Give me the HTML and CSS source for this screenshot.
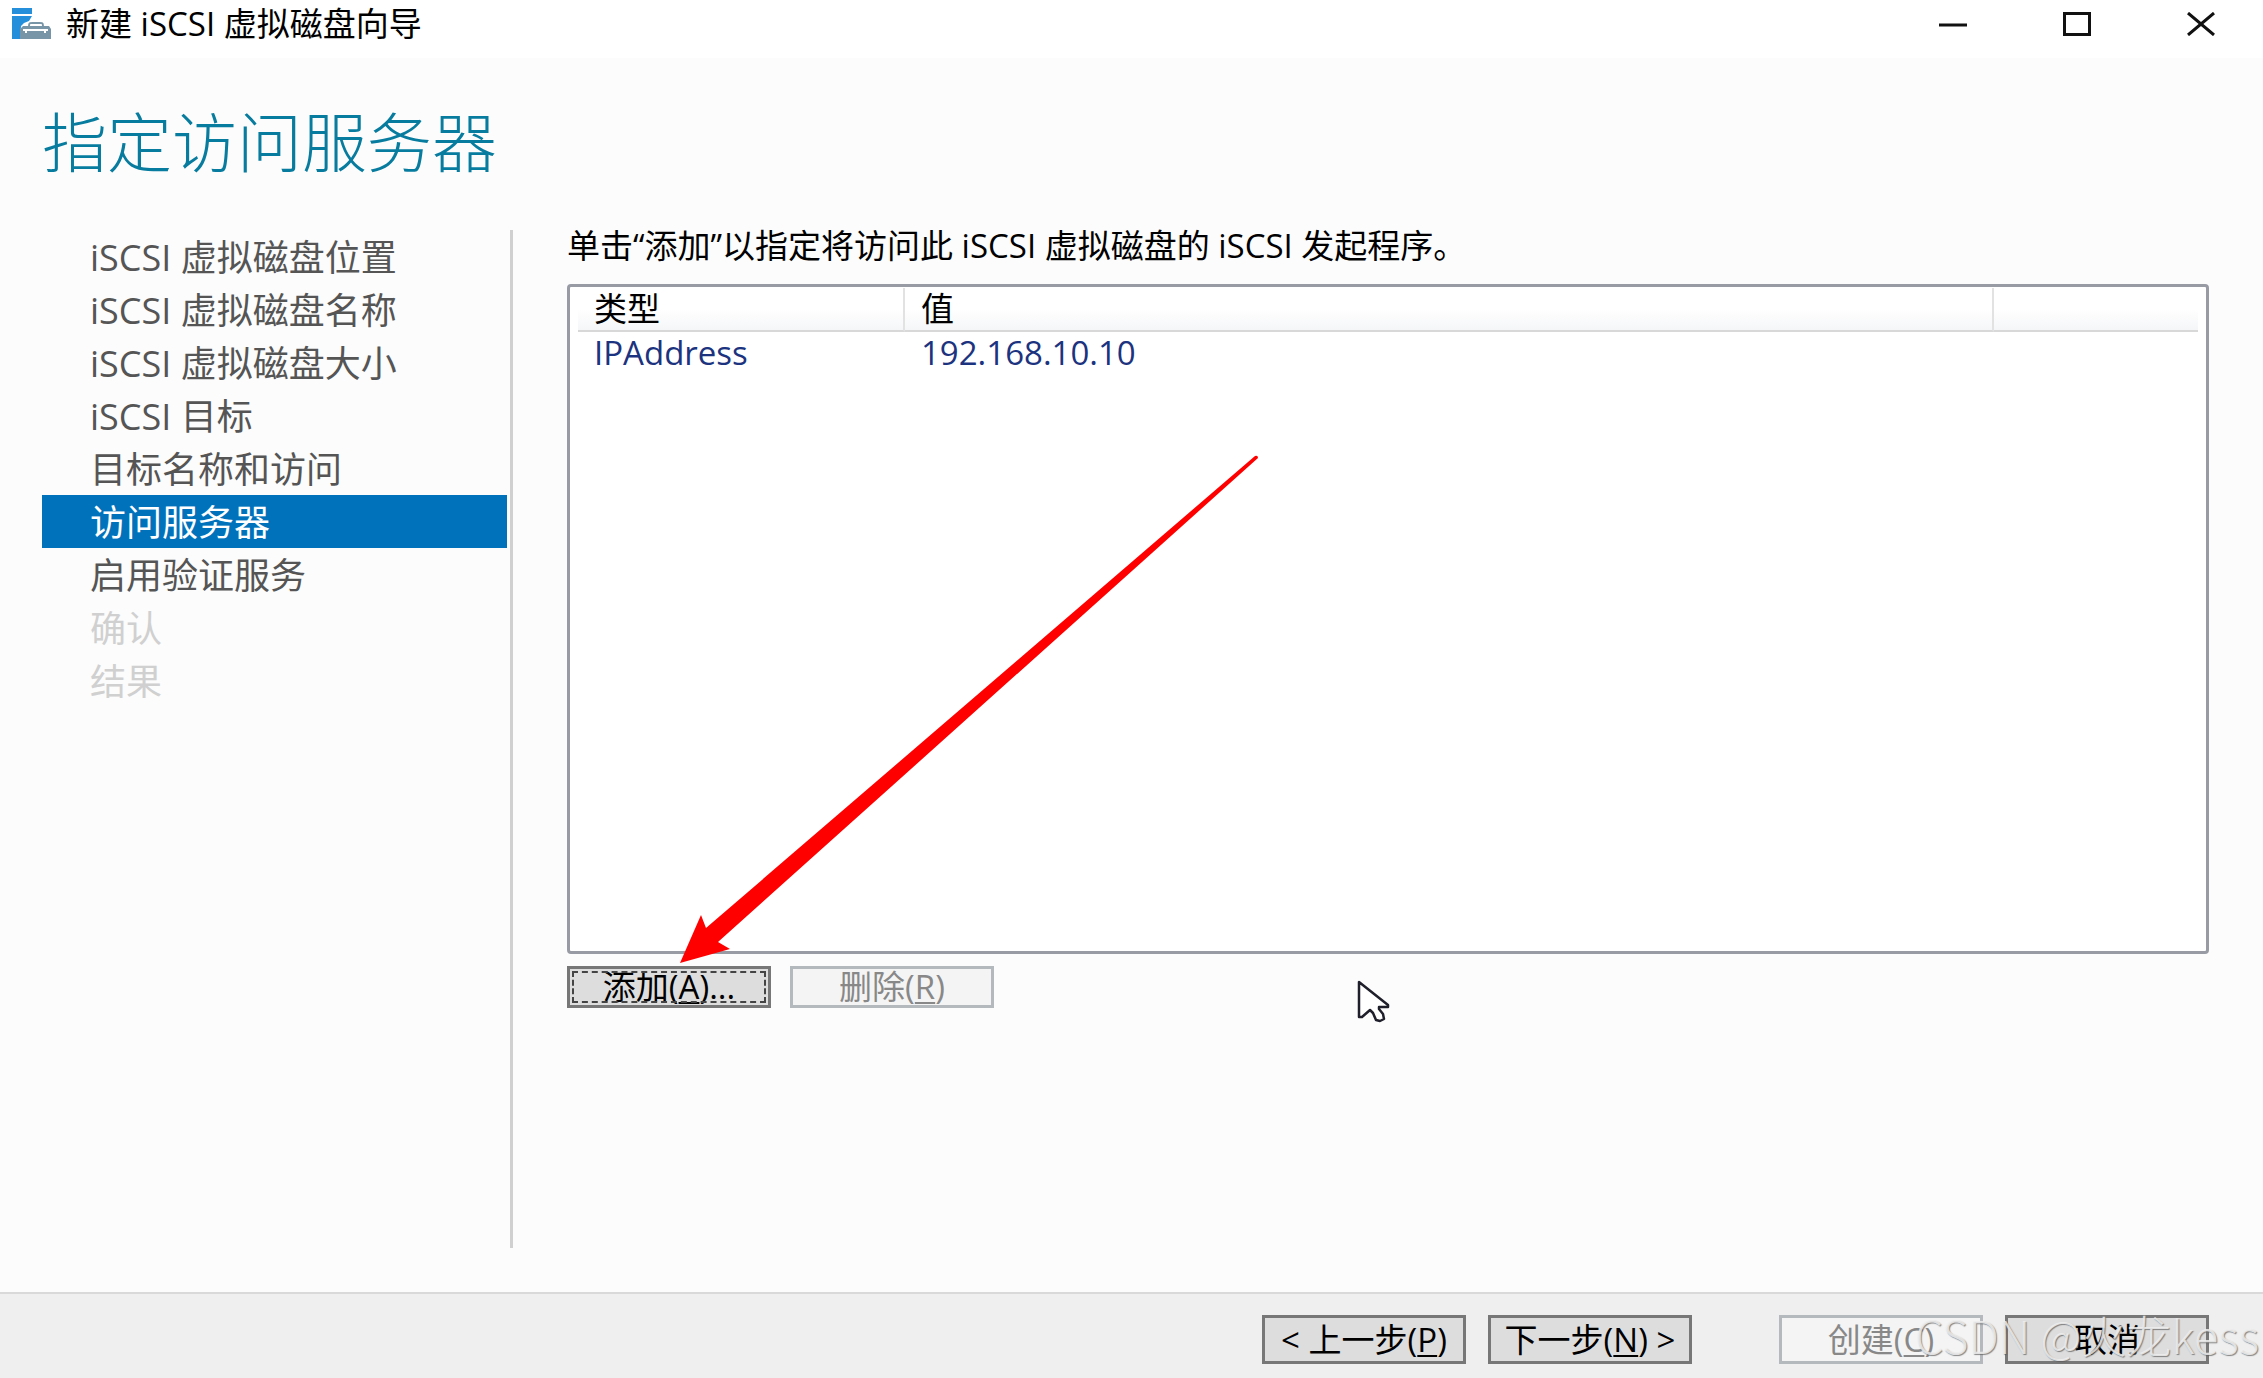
FILE: index.html
```html
<!DOCTYPE html>
<html lang="zh-CN">
  <head>
    <meta charset="utf-8">
    <title>新建 iSCSI 虚拟磁盘向导</title>
    <link rel="stylesheet" href="styles.css">
  </head>
  <body>
    <header class="titlebar">
      <svg class="app-icon" viewBox="0 0 40 32" aria-hidden="true">
        <path fill="#258fdb" d="M0 0h20v6H0zM0 8h20l-3 5-5 2-3 3-1 13H0z"/>
        <path fill="none" stroke="#7895a8" stroke-width="2" d="M17 18c0-4 2-3 7-3s7-1 7 3"/>
        <path fill="#7895a8" d="M11 18h26l2 3v10H8V21z"/>
        <path fill="none" stroke="#fff" stroke-width="2" d="M11 22h25M14 21v4M33 21v4"/>
      </svg>
      <span class="caption">新建 iSCSI 虚拟磁盘向导</span>
      <div class="window-controls">
        <button type="button" aria-label="最小化">
          <svg viewBox="0 0 28 24"><path d="M0 13h28"/></svg>
        </button>
        <button type="button" aria-label="最大化">
          <svg viewBox="0 0 28 24"><path d="M1.500 1.500h25v21h-25z"/></svg>
        </button>
        <button type="button" aria-label="关闭">
          <svg viewBox="0 0 28 24"><path d="M1 1l26 22M27 1L1 23"/></svg>
        </button>
      </div>
    </header>

    <main class="wizard">
      <h1>指定访问服务器</h1>
      <div class="columns">
        <nav class="steps">
          <a href="#">iSCSI 虚拟磁盘位置</a>
          <a href="#">iSCSI 虚拟磁盘名称</a>
          <a href="#">iSCSI 虚拟磁盘大小</a>
          <a href="#">iSCSI 目标</a>
          <a href="#">目标名称和访问</a>
          <a href="#" class="active" aria-current="step">访问服务器</a>
          <a href="#">启用验证服务</a>
          <a class="disabled">确认</a>
          <a class="disabled">结果</a>
        </nav>
        <section class="content">
          <p>单击“添加”以指定将访问此 iSCSI 虚拟磁盘的 iSCSI 发起程序。</p>
          <div class="list">
            <table>
              <thead>
                <tr><th class="type">类型</th><th>值</th><th class="rest"></th></tr>
              </thead>
              <tbody>
                <tr><td>IPAddress</td><td>192.168.10.10</td><td></td></tr>
              </tbody>
            </table>
          </div>
          <div class="actions">
            <button type="button" class="btn focused">添加(<u>A</u>)...</button>
            <button type="button" class="btn" disabled>删除(<u>R</u>)</button>
          </div>
          <svg class="arrow" viewBox="0 0 580 510" aria-hidden="true">
            <path fill="#f00" d="M0 509l21-48 5 13L575 2q3-1 3 2L38 488l12 7z"/>
          </svg>
          <svg class="cursor" viewBox="0 0 34 44" aria-hidden="true">
            <path fill="#fff" stroke="#1f1f2b" stroke-width="2.500" stroke-linejoin="round" d="M2 2v35h3l8-7 3 3 3 7 4 1 4-2-1-5-4-5v-2h9v-2z"/>
          </svg>
        </section>
      </div>
    </main>

    <footer class="footer">
      <button type="button" class="btn">&lt; 上一步(<u>P</u>)</button>
      <button type="button" class="btn">下一步(<u>N</u>) &gt;</button>
      <button type="button" class="btn create" disabled>创建(<u>C</u>)</button>
      <button type="button" class="btn">取消</button>
      <span class="watermark">CSDN @火龙kess</span>
    </footer>
  </body>
</html>
```

FILE: styles.css
```css
* {
  box-sizing: border-box;
}

body {
  display: flex;
  flex-direction: column;
  min-height: 100vh;
  margin: 0;
  background: #fcfcfc;
  color: #000;
  font-family: "Open Sans", "Noto Sans CJK SC", sans-serif;
  font-size: 33px;
}

button {
  font: inherit;
}

/* title bar */

.titlebar {
  display: flex;
  align-items: center;
  height: 58px;
  padding: 0 14px 10px 12px;
  background: #fff;
}

.app-icon {
  width: 40px;
  height: 32px;
  margin-right: 14px;
}

.caption {
  line-height: 48px;
}

.window-controls {
  display: flex;
  gap: 28px;
  margin-left: auto;
}

.window-controls button {
  display: flex;
  align-items: center;
  justify-content: center;
  width: 96px;
  height: 48px;
  padding: 0;
  border: 0;
  background: none;
}

.window-controls svg {
  width: 28px;
  height: 24px;
  fill: none;
  stroke: #111;
  stroke-width: 3;
}

/* wizard body */

.wizard {
  flex: 1;
  display: flex;
  flex-direction: column;
  padding: 36px 54px 44px 42px;
}

h1 {
  margin: 0 0 40px;
  color: #077c9f;
  font-size: 65px;
  font-weight: 300;
  line-height: 96px;
}

.columns {
  flex: 1;
  display: grid;
  grid-template-columns: 471px 1fr;
  column-gap: 54px;
}

.steps {
  padding-right: 3px;
  border-right: 3px solid #d0d0d0;
  font-size: 36px;
}

.steps a {
  display: block;
  height: 53px;
  padding-left: 48px;
  color: #555;
  line-height: 56px;
  text-decoration: none;
  white-space: nowrap;
}

.steps .active {
  background: #0072bc;
  color: #fff;
}

.steps .disabled {
  color: #d0d0d0;
}

.content {
  position: relative;
  display: flex;
  flex-direction: column;
  padding-bottom: 240px;
}

.content p {
  margin: 0 0 22px;
  line-height: 32px;
}

.list {
  flex: 1;
  padding: 1px 8px;
  border: 3px solid #989ba4;
  border-radius: 4px;
  background: #fff;
}

table {
  width: 100%;
  border-collapse: separate;
  border-spacing: 0;
  table-layout: fixed;
}

th,
td {
  padding: 0 16px;
  font-weight: 400;
  line-height: 42px;
  text-align: left;
}

th {
  height: 44px;
  border-right: 2px solid #e2e2e2;
  border-bottom: 2px solid #d8d8d8;
  background: linear-gradient(#fff 50%, #f5f6f8);
}

th:last-child {
  border-right: 0;
}

td {
  color: #1c3380;
}

.type {
  width: 327px;
}

.rest {
  width: 204px;
}

.actions {
  display: flex;
  gap: 19px;
  margin-top: 12px;
}

.btn {
  width: 204px;
  height: 49px;
  padding: 0;
  border: 3px solid #777;
  background: #ddd;
  color: #000;
  line-height: 42px;
  white-space: nowrap;
}

.btn:disabled {
  border-color: #b4b9bd;
  background: #f4f4f4;
  color: #888;
}

.btn u {
  text-decoration-thickness: 2px;
  text-underline-offset: 3px;
}

.actions .btn {
  height: 42px;
  line-height: 34px;
}

.focused {
  outline: 2px dashed #444;
  outline-offset: -7px;
}

/* overlays */

.arrow {
  position: absolute;
  left: 113px;
  bottom: 284px;
  width: 580px;
  height: 510px;
}

.cursor {
  position: absolute;
  left: 790px;
  bottom: 224px;
  width: 34px;
  height: 44px;
}

/* footer */

.footer {
  position: relative;
  display: flex;
  justify-content: flex-end;
  gap: 22px;
  padding: 21px 54px 14px;
  border-top: 2px solid #d9d9d9;
  background: #efefef;
}

.create {
  margin-left: 65px;
}

.watermark {
  position: absolute;
  right: 4px;
  bottom: 11px;
  color: rgba(240, 240, 240, 0.85);
  font-family: "Noto Sans CJK SC", sans-serif;
  font-size: 45px;
  font-weight: 300;
  line-height: 64px;
  text-shadow: 1px 1px 1px rgba(90, 90, 90, 0.7);
  pointer-events: none;
}
```
